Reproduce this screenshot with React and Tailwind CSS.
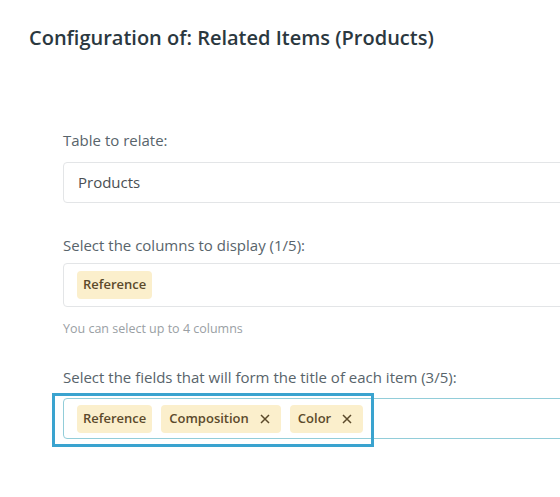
const font = { fontFamily: '"Open Sans", "Noto Sans", sans-serif' };

function Chip({ label, removable }) {
  return (
    <span
      className={`flex items-center gap-[11px] h-[28px] rounded-[4px] bg-[#fbefcc] text-[13px] font-semibold text-[#5b4a2b] ${
        removable ? "pl-[8px] pr-[11px]" : "px-[6px]"
      }`}
    >
      {label}
      {removable && (
        <svg width="10" height="10" viewBox="0 0 10 10" className="text-[#5b4a2b]">
          <path d="M1 1 L9 9 M9 1 L1 9" stroke="currentColor" strokeWidth="1.5" />
        </svg>
      )}
    </span>
  );
}

function Field({ label, children, hint }) {
  return (
    <div className="flex flex-col">
      <div className="text-[15px] leading-[20px] text-[#58646b]">{label}</div>
      {children}
      {hint && <div className="mt-[14px] text-[12.5px] leading-[16px] text-[#9aa0a4]">{hint}</div>}
    </div>
  );
}

export default function App() {
  return (
    <div className="w-[560px] h-[497px] overflow-hidden bg-white" style={font}>
      <h1 className="pt-[24px] pl-[29px] text-[20px] leading-[28px] font-semibold text-[#2b383f]">
        Configuration of: Related Items (Products)
      </h1>
      <div className="pl-[63px] pt-[78px] flex flex-col w-[700px]">
        <Field label="Table to relate:">
          <div className="mt-[12px] flex items-center h-[41px] w-[620px] rounded-[4px] border border-[#e3e5e7] pl-[14px] text-[15px] text-[#4a4f53]">
            Products
          </div>
        </Field>
        <div className="h-[32px]" />
        <Field label="Select the columns to display (1/5):" hint="You can select up to 4 columns">
          <div className="mt-[8px] flex items-center h-[44px] w-[620px] rounded-[4px] border border-[#e3e5e7] pl-[13px]">
            <Chip label="Reference" />
          </div>
        </Field>
        <div className="h-[30px]" />
        <Field label="Select the fields that will form the title of each item (3/5):">
          <div className="relative mt-[11px]">
            <div className="flex items-center gap-[9px] h-[41px] w-[620px] rounded-[4px] border border-[#92cdd9] pl-[13px]">
              <Chip label="Reference" />
              <Chip label="Composition" removable />
              <Chip label="Color" removable />
            </div>
            <div className="absolute left-[-11px] top-[-5px] w-[322px] h-[54px] border-[3px] border-[#3aa3cf]" />
          </div>
        </Field>
      </div>
    </div>
  );
}
